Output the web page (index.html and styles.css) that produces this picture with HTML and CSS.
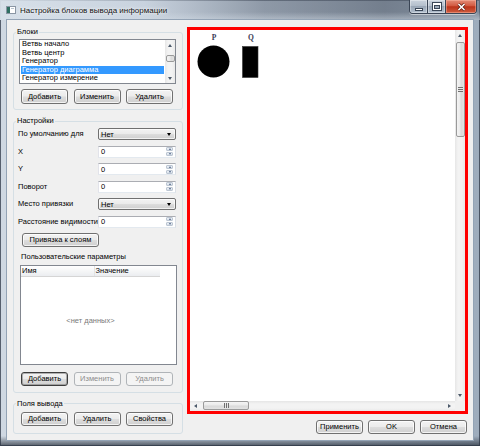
FILE: index.html
```html
<!DOCTYPE html>
<html lang="ru">
<head>
<meta charset="utf-8">
<title>Настройка блоков вывода информации</title>
<link rel="stylesheet" href="styles.css">
</head>
<body>
<div class="window">
  <div class="titlebar">
    <svg class="app-icon" width="10" height="8" viewBox="0 0 10 8">
      <rect x="0.5" y="0.5" width="9" height="7" fill="#ffffff" stroke="#8a96a4"/>
      <rect x="1" y="1" width="3" height="6" fill="#2f6f62"/>
      <rect x="5" y="2" width="3" height="1" fill="#b8c4cf"/>
    </svg>
    <span class="title">Настройка блоков вывода информации</span>
    <div class="caption-buttons">
      <div class="cap cap-min"><span class="min-glyph"></span></div>
      <div class="cap cap-max"><span class="max-glyph"></span></div>
      <div class="cap-close">
        <svg width="9" height="8" viewBox="0 0 9 8"><path d="M1.5 1 L7.5 7 M7.5 1 L1.5 7" stroke="#5a1a10" stroke-width="3"/><path d="M1.5 1 L7.5 7 M7.5 1 L1.5 7" stroke="#ffffff" stroke-width="1.6"/></svg>
      </div>
    </div>
  </div>
  <div class="frame-body">
    <div class="client">
      <div class="left-col">
        <fieldset class="group group-blocks">
          <legend class="group-title">Блоки</legend>
          <div class="listbox">
            <ul class="list-items">
              <li>Ветвь начало</li>
              <li>Ветвь центр</li>
              <li>Генератор</li>
              <li class="selected">Генератор диаграмма</li>
              <li>Генератор измерение</li>
            </ul>
            <div class="sb-v sb-list">
              <div class="sb-arrow"><span class="tri-up"></span></div>
              <div class="sb-thumb-v list-thumb"></div>
              <div class="sb-fill"></div>
              <div class="sb-arrow"><span class="tri-down"></span></div>
            </div>
          </div>
          <div class="btn-row">
            <button class="btn">Добавить</button>
            <button class="btn">Изменить</button>
            <button class="btn">Удалить</button>
          </div>
        </fieldset>

        <fieldset class="group group-settings">
          <legend class="group-title">Настройки</legend>
          <div class="form">
            <span class="form-label">По умолчанию для</span>
            <div class="combo"><span>Нет</span><span class="combo-arrow"></span></div>
            <span class="form-label">X</span>
            <div class="spin"><span>0</span><span class="spin-btns"><span class="spin-half"><span class="stri-up"></span></span><span class="spin-half"><span class="stri-down"></span></span></span></div>
            <span class="form-label">Y</span>
            <div class="spin"><span>0</span><span class="spin-btns"><span class="spin-half"><span class="stri-up"></span></span><span class="spin-half"><span class="stri-down"></span></span></span></div>
            <span class="form-label">Поворот</span>
            <div class="spin"><span>0</span><span class="spin-btns"><span class="spin-half"><span class="stri-up"></span></span><span class="spin-half"><span class="stri-down"></span></span></span></div>
            <span class="form-label">Место привязки</span>
            <div class="combo"><span>Нет</span><span class="combo-arrow"></span></div>
            <span class="form-label">Расстояние видимости</span>
            <div class="spin"><span>0</span><span class="spin-btns"><span class="spin-half"><span class="stri-up"></span></span><span class="spin-half"><span class="stri-down"></span></span></span></div>
          </div>
          <button class="btn btn-layers">Привязка к слоям</button>
          <div class="sub-label">Пользовательские параметры</div>
          <div class="table">
            <div class="table-head">
              <span class="th th-name">Имя</span>
              <span class="th th-value">Значение</span>
            </div>
            <div class="table-empty">&lt;нет данных&gt;</div>
          </div>
          <div class="btn-row">
            <button class="btn btn-default">Добавить</button>
            <button class="btn" disabled>Изменить</button>
            <button class="btn" disabled>Удалить</button>
          </div>
        </fieldset>

        <fieldset class="group group-fields">
          <legend class="group-title">Поля вывода</legend>
          <div class="btn-row">
            <button class="btn">Добавить</button>
            <button class="btn">Удалить</button>
            <button class="btn">Свойства</button>
          </div>
        </fieldset>
      </div>

      <div class="right-col">
        <div class="canvas">
          <div class="canvas-view">
            <svg class="scene" width="80" height="52" viewBox="0 0 80 52">
              <text x="24" y="10" class="node-label" text-anchor="middle">P</text>
              <circle cx="23.5" cy="31.5" r="16" fill="#000000"/>
              <text x="61" y="10" class="node-label" text-anchor="middle">Q</text>
              <rect x="52.5" y="16.5" width="15.5" height="31" fill="#000000" stroke="#333333" stroke-width="0.6"/>
            </svg>
          </div>
          <div class="sb-v sb-canvas">
            <div class="sb-arrow sb-arrow-v"><span class="tri-up"></span></div>
            <div class="sb-thumb-v canvas-thumb"><span class="grip-h"></span></div>
            <div class="sb-fill"></div>
            <div class="sb-arrow sb-arrow-v"><span class="tri-down"></span></div>
          </div>
          <div class="sb-h">
            <div class="sb-arrow sb-arrow-h"><span class="tri-left"></span></div>
            <div class="sb-thumb-h"><span class="grip-v"></span></div>
            <div class="sb-fill"></div>
            <div class="sb-arrow sb-arrow-h"><span class="tri-right"></span></div>
          </div>
          <div class="sb-corner"></div>
        </div>
        <div class="dialog-buttons">
          <button class="btn">Применить</button>
          <button class="btn">OK</button>
          <button class="btn">Отмена</button>
        </div>
      </div>
    </div>
  </div>
</div>
</body>
</html>
```

FILE: styles.css
```css
* { box-sizing: border-box; }

html, body {
  margin: 0;
  padding: 0;
}

body {
  width: 480px;
  height: 446px;
  overflow: hidden;
  font-family: "Liberation Sans", Arial, sans-serif;
  font-size: 7.5px;
  color: #000;
  background: #5d6b7c;
}

.window {
  width: 480px;
  height: 446px;
  display: flex;
  flex-direction: column;
  background:
    linear-gradient(to bottom, rgba(255,255,255,0) 0, rgba(255,255,255,0) 436px, rgba(40,48,60,0.75) 446px),
    linear-gradient(to right, #cfd8e2 0, #c7d2de 40%, #b4c1cf 75%, #9eacbc 100%);
  box-shadow: inset 0 0 0 1px rgba(45, 55, 70, 0.75);
}

/* ---------- title bar ---------- */
.titlebar {
  height: 20px;
  display: flex;
  align-items: flex-start;
  padding-left: 6px;
  background:
    linear-gradient(to bottom, rgba(60,70,85,0) 0, rgba(60,70,85,0) 60%, rgba(215,224,233,0.5) 100%),
    linear-gradient(to right, rgba(215,224,233,0.95) 0, rgba(200,210,222,0.7) 30%, rgba(110,120,135,0.6) 55%, rgba(90,100,115,0.7) 80%, rgba(110,122,138,0.6) 100%);
}

.app-icon {
  margin-top: 6px;
  flex: none;
}

.title {
  margin-left: 4px;
  font-size: 8px;
  line-height: 21px;
  color: #111;
  text-shadow: 0 0 4px rgba(255,255,255,0.9), 0 0 2px rgba(255,255,255,0.9);
  white-space: nowrap;
}

.caption-buttons {
  margin-left: auto;
  margin-right: 3px;
  display: flex;
  height: 14px;
  border: 1px solid #3a4555;
  border-top: none;
  border-radius: 0 0 4px 4px;
  overflow: hidden;
  box-shadow: 0 1px 0 rgba(255,255,255,0.5);
}

.cap {
  width: 18px;
  height: 13px;
  display: flex;
  align-items: center;
  justify-content: center;
  background: linear-gradient(to bottom, #c9d2dc 0, #b4bfcc 45%, #9aa7b7 50%, #b2bfcd 100%);
  border-right: 1px solid #3a4555;
  box-shadow: inset 0 0 0 1px rgba(255,255,255,0.35);
}

.cap-close {
  width: 30px;
  height: 13px;
  display: flex;
  align-items: center;
  justify-content: center;
  background: linear-gradient(to bottom, #e38c77 0, #d25a41 45%, #bb3319 52%, #cf5e42 100%);
  box-shadow: inset 0 0 0 1px rgba(255,190,170,0.45);
}

.min-glyph {
  width: 8px;
  height: 3px;
  margin-top: 5px;
  background: #fff;
  border: 1px solid #3a4656;
}

.max-glyph {
  width: 8px;
  height: 7px;
  border: 1px solid #fff;
  border-top-width: 2px;
  box-shadow: 0 0 0 1px #3a4656, inset 0 0 0 1px #3a4656;
}

/* ---------- client ---------- */
.frame-body {
  flex: 1;
  display: flex;
  padding: 0 7px 7px 7px;
}

.client {
  flex: 1;
  background: #f0f0f0;
  box-shadow: 0 0 0 1px #93a3b5;
  display: grid;
  grid-template-columns: 170px 281px;
  column-gap: 4px;
  padding: 7px 5px 6px 6px;
}

.left-col {
  display: flex;
  flex-direction: column;
}

.group {
  margin: 0;
  min-width: 0;
  border: 1px solid #d5dfe5;
  border-radius: 3px;
  padding: 2px 6px 5px 4px;
}

.group + .group { margin-top: 6px; }

.group-title {
  padding: 0 1px;
  margin-left: -2px;
  line-height: 10px;
  font-size: 7.5px;
}

.group-settings { padding-bottom: 6px; }
.group-fields { padding-top: 3px; padding-bottom: 7px; }

/* ---------- list box ---------- */
.listbox {
  margin-left: 1px;
  width: 157px;
  height: 45px;
  border: 1px solid #828790;
  background: #fff;
  display: flex;
}

.list-items {
  flex: 1;
  margin: 0;
  padding: 0 1px;
  list-style: none;
  overflow: hidden;
}

.list-items li {
  height: 8.5px;
  line-height: 8.5px;
  padding-left: 1px;
  white-space: nowrap;
}

.list-items li.selected {
  background: #3399ff;
  color: #fff;
}

/* ---------- scrollbars ---------- */
.sb-v {
  width: 10px;
  display: flex;
  flex-direction: column;
  background: linear-gradient(to right, #e6e6e6 0, #f3f3f3 30%, #f3f3f3 70%, #e9e9e9 100%);
}

.sb-h {
  height: 10px;
  display: flex;
  background: linear-gradient(to bottom, #e6e6e6 0, #f3f3f3 30%, #f3f3f3 70%, #e9e9e9 100%);
}

.sb-arrow {
  flex: none;
  height: 10px;
  display: flex;
  align-items: center;
  justify-content: center;
}

.sb-arrow-v { height: 11px; }
.sb-arrow-h { width: 11px; height: 10px; }

.sb-fill { flex: 1; }

.tri-up, .tri-down, .tri-left, .tri-right {
  width: 0;
  height: 0;
  border: 0 solid transparent;
}

.tri-up { border-width: 0 2.5px 3px; border-bottom-color: #4d5a6a; }
.tri-down { border-width: 3px 2.5px 0; border-top-color: #4d5a6a; }
.tri-left { border-width: 2.5px 3px 2.5px 0; border-right-color: #4d5a6a; }
.tri-right { border-width: 2.5px 0 2.5px 3px; border-left-color: #4d5a6a; }

.sb-thumb-v {
  margin: 0 0.5px;
  border: 1px solid #9a9a9a;
  border-radius: 2px;
  background: linear-gradient(to right, #f4f4f4 0, #eaeaea 45%, #d9d9d9 55%, #e3e3e3 100%);
  display: flex;
  align-items: center;
  justify-content: center;
}

.list-thumb {
  height: 7px;
  margin-top: 5px;
}

.canvas-thumb {
  height: 95px;
  margin-top: 1px;
}

.sb-thumb-h {
  width: 46px;
  margin: 0.5px 0 0.5px 2px;
  border: 1px solid #9a9a9a;
  border-radius: 2px;
  background: linear-gradient(to bottom, #f4f4f4 0, #eaeaea 45%, #d9d9d9 55%, #e3e3e3 100%);
  display: flex;
  align-items: center;
  justify-content: center;
}

.grip-h {
  width: 5px;
  height: 5px;
  background: repeating-linear-gradient(to bottom, #6f6f6f 0, #6f6f6f 1px, #e6e6e6 1px, #e6e6e6 2px);
}

.grip-v {
  width: 5px;
  height: 5px;
  background: repeating-linear-gradient(to right, #6f6f6f 0, #6f6f6f 1px, #e6e6e6 1px, #e6e6e6 2px);
}

.sb-corner { background: #f0f0f0; }

/* ---------- buttons ---------- */
.btn {
  flex: none;
  width: 47px;
  height: 14px;
  padding: 0;
  font: inherit;
  line-height: 12px;
  color: #000;
  text-align: center;
  border: 1px solid #707070;
  border-radius: 3px;
  background: linear-gradient(to bottom, #f3f3f3 0, #ebebeb 48%, #dddddd 52%, #cfcfcf 100%);
  box-shadow: inset 0 0 0 1px rgba(255,255,255,0.75);
  white-space: nowrap;
}

.btn-default {
  border-color: #3d3d3d;
  box-shadow: inset 0 0 0 1px rgba(110,110,110,0.5);
}

.btn:disabled {
  color: #8d8d8d;
  border-color: #b0b4b8;
  background: #f4f4f4;
  box-shadow: none;
}

.btn-row {
  display: flex;
  gap: 5.5px;
  margin-left: 3px;
}

.group-blocks .btn-row { margin-top: 5px; }
.group-blocks .btn-row .btn { height: 15px; line-height: 13px; }
.group-settings .btn-row { margin-top: 7px; }

.btn-layers {
  display: block;
  width: 77px;
  margin: 5px 0 0 4px;
}

/* ---------- form ---------- */
.form {
  display: grid;
  grid-template-columns: 80px 78px;
  grid-auto-rows: 12px;
  row-gap: 5.6px;
  align-items: center;
}

.form-label {
  line-height: 12px;
  white-space: nowrap;
}

.combo {
  height: 12px;
  display: flex;
  align-items: center;
  padding: 0 4px 0 2px;
  border: 1px solid #707070;
  border-radius: 2px;
  background: linear-gradient(to bottom, #f3f3f3 0, #ebebeb 48%, #dddddd 52%, #cfcfcf 100%);
  box-shadow: inset 0 0 0 1px rgba(255,255,255,0.7);
}

.combo-arrow {
  margin-left: auto;
  width: 0;
  height: 0;
  border-style: solid;
  border-width: 3px 2.5px 0;
  border-color: #000 transparent transparent;
}

.spin {
  height: 12px;
  display: flex;
  align-items: center;
  padding-left: 2px;
  background: #fff;
  border: 1px solid;
  border-color: #abadb3 #dbdfe6 #e3e9ef #e2e3ea;
}

.spin-btns {
  margin-left: auto;
  margin-right: 2px;
  width: 7px;
  height: 9px;
  display: flex;
  flex-direction: column;
  gap: 1px;
}

.spin-half {
  flex: 1;
  display: flex;
  align-items: center;
  justify-content: center;
  background: linear-gradient(to bottom, #eef2f7, #d3dce7);
  border: 0.5px solid #bcc6d2;
  border-radius: 1px;
}

.stri-up, .stri-down {
  width: 0;
  height: 0;
  border-style: solid;
}

.stri-up { border-width: 0 1.5px 2px; border-color: transparent transparent #4d6185; }
.stri-down { border-width: 2px 1.5px 0; border-color: #4d6185 transparent transparent; }

/* ---------- user params table ---------- */
.sub-label {
  margin: 5px 0 0 3px;
  line-height: 10px;
  white-space: nowrap;
}

.table {
  margin: 3px 0 0 2px;
  width: 157px;
  height: 100px;
  border: 1px solid #828790;
  background: #fff;
  display: flex;
  flex-direction: column;
}

.table-head {
  display: flex;
  width: 139px;
  height: 11px;
  background: linear-gradient(to bottom, #ffffff 0, #f5f6f7 50%, #ebedf0 100%);
  border-bottom: 1px solid #d5d5d5;
}

.th {
  line-height: 10px;
  white-space: nowrap;
}

.th-name {
  width: 73px;
  padding-left: 1px;
}

.th-value {
  flex: 1;
  border-left: 1px solid #e2e3e5;
  padding-left: 0.5px;
}

.table-empty {
  flex: 1;
  width: 139px;
  display: flex;
  align-items: center;
  justify-content: center;
  color: #7a7a7a;
}

/* ---------- right column ---------- */
.right-col {
  display: flex;
  flex-direction: column;
}

.canvas {
  flex: 1;
  border: 3px solid #ff0000;
  background: #fff;
  display: grid;
  grid-template-columns: 1fr 10px;
  grid-template-rows: 1fr 10px;
  min-height: 0;
}

.canvas-view {
  background: #fff;
  overflow: hidden;
}

.scene { display: block; }

.node-label {
  font-family: "Liberation Serif", "Times New Roman", serif;
  font-size: 7.5px;
  font-weight: bold;
  fill: #3a3a55;
}

.dialog-buttons {
  margin-top: 6px;
  margin-right: 1px;
  display: flex;
  justify-content: flex-end;
  gap: 5px;
}
```
